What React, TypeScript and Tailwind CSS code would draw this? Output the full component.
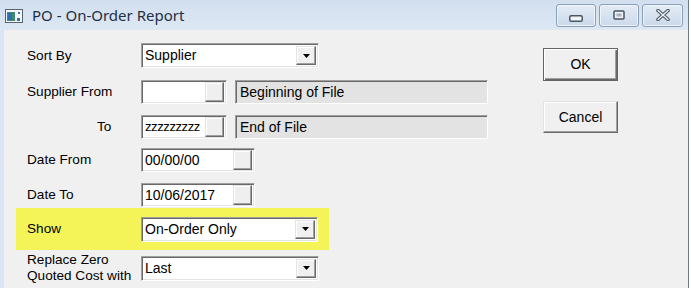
import React from 'react'

const sunken =
  'border border-t-[#a0a0a0] border-l-[#a0a0a0] border-b-white border-r-white shadow-[inset_1px_1px_0_#696969,inset_-1px_-1px_0_#e3e3e3]'
const raised =
  'border border-t-[#e3e3e3] border-l-[#e3e3e3] border-b-[#696969] border-r-[#696969] shadow-[inset_-1px_-1px_0_#a0a0a0,inset_1px_1px_0_#ffffff]'

function Arrow() {
  return (
    <svg width="7" height="4" viewBox="0 0 7 4">
      <path d="M0 0h7L3.5 4z" fill="#000" />
    </svg>
  )
}

function Combo({ value }: { value: string }) {
  return (
    <div className={`flex h-[25px] w-[178px] items-center bg-white pl-[3px] pr-[2px] ${sunken}`}>
      <span className="flex-1 truncate text-[14px] text-black">{value}</span>
      <div className={`flex h-[19px] w-[20px] items-center justify-center bg-[#f0f0f0] ${raised}`}>
        <Arrow />
      </div>
    </div>
  )
}

function Lookup({ value, width, textClass = 'text-[14px]' }: { value: string; width: string; textClass?: string }) {
  return (
    <div className={`flex h-[24px] items-center bg-white pl-[3px] pr-[2px] ${width} ${sunken}`}>
      <span className={`flex-1 whitespace-nowrap text-black ${textClass}`}>{value}</span>
      <div className={`h-[20px] w-[19px] shrink-0 bg-[#efefef] ${raised}`} />
    </div>
  )
}

function Desc({ text }: { text: string }) {
  return (
    <div className={`flex h-[24px] w-[253px] items-center bg-[#e3e3e3] pl-[4px] text-[14px] text-black ${sunken}`}>
      {text}
    </div>
  )
}

function Row({ label, children, className = '' }: { label: React.ReactNode; children: React.ReactNode; className?: string }) {
  return (
    <div className={`flex items-center px-[11px] ${className}`}>
      <div className="w-[114px] shrink-0 text-[13.6px] leading-[16px] text-black">{label}</div>
      {children}
    </div>
  )
}

function TitleButton({ children, wide = 'w-[40px]' }: { children: React.ReactNode; wide?: string }) {
  return (
    <div className={`flex h-[23px] ${wide} items-center justify-center rounded-[3px] border border-[#8a9fb8] bg-gradient-to-b from-[#e3ecf6] to-[#cad9ea] shadow-[inset_0_0_0_1px_#eef4fa]`}>
      {children}
    </div>
  )
}

export default function App() {
  return (
    <div className="h-[288px] w-[691px] overflow-hidden bg-white font-['Liberation_Sans',Arial,sans-serif]">
      <div className="flex h-[288px] w-[689px] flex-col border-r border-[#6b7787] bg-[#d9e5f2]">
        {/* title bar */}
        <div className="flex h-[30px] shrink-0 items-center bg-gradient-to-b from-[#d2dfee] to-[#dde8f4] pl-[5px] pr-[4px]">
          <svg width="18" height="14" viewBox="0 0 18 14" className="mt-[1px]">
            <rect x="0.5" y="0.5" width="17" height="13" fill="#f4f6f8" stroke="#5a6470" />
            <rect x="2" y="3" width="8" height="9" fill="#3f8a6c" />
            <rect x="3" y="4" width="4" height="7" fill="#2f6fb0" />
            <rect x="12" y="9" width="3" height="3" fill="#2f6fb0" />
            <rect x="13" y="3" width="2" height="2" fill="#3a7bd0" />
          </svg>
          <span className="ml-[9px] font-['Noto_Sans',sans-serif] text-[15px] text-[#1f2f44]">PO - On-Order Report</span>
          <div className="ml-auto flex gap-[3px] pr-[1px]">
            <TitleButton>
              <svg width="14" height="7" viewBox="0 0 14 7" className="mt-[6px]">
                <rect x="0.75" y="0.75" width="12.5" height="5.5" rx="1.5" fill="#f3f6f9" stroke="#4a5563" strokeWidth="1.5" />
              </svg>
            </TitleButton>
            <TitleButton>
              <svg width="12" height="10" viewBox="0 0 12 10">
                <rect x="1" y="1" width="10" height="8" rx="1" fill="#eef2f6" stroke="#4a5563" strokeWidth="1.5" />
                <rect x="3.5" y="3.5" width="5" height="3" fill="#a9b4c0" />
              </svg>
            </TitleButton>
            <TitleButton wide="w-[41px]">
              <svg width="14" height="12" viewBox="0 0 14 12">
                <path d="M2 1.5l10 9M12 1.5l-10 9" stroke="#4a5563" strokeWidth="3.6" strokeLinecap="round" />
                <path d="M2 1.5l10 9M12 1.5l-10 9" stroke="#eef2f6" strokeWidth="1.4" strokeLinecap="round" />
              </svg>
            </TitleButton>
          </div>
        </div>

        {/* body */}
        <div className="ml-[4px] flex flex-1 bg-[#f0f0f0]">
          <div className="ml-[12px] flex w-[508px] flex-col">
            <Row label="Sort By" className="mt-[13px]">
              <Combo value="Supplier" />
            </Row>
            <Row label="Supplier From" className="mt-[12px]">
              <Lookup value="" width="w-[86px]" />
              <div className="ml-[8px]">
                <Desc text="Beginning of File" />
              </div>
            </Row>
            <Row label={<span className="pl-[70px]">To</span>} className="mt-[11px]">
              <Lookup value="zzzzzzzzz" width="w-[86px]" textClass="text-[13px] tracking-[-0.4px]" />
              <div className="ml-[8px]">
                <Desc text="End of File" />
              </div>
            </Row>
            <Row label="Date From" className="mt-[9px]">
              <Lookup value="00/00/00" width="w-[114px]" />
            </Row>
            <Row label="Date To" className="mt-[11px]">
              <Lookup value="10/06/2017" width="w-[114px]" />
            </Row>
            <Row label="Show" className="mt-[1px] h-[42px] w-[313px] bg-[#f4f459]">
              <Combo value="On-Order Only" />
            </Row>
            <Row
              label={
                <>
                  Replace Zero
                  <br />
                  Quoted Cost with
                </>
              }
              className="mt-[2px]"
            >
              <Combo value="Last" />
            </Row>
          </div>

          <div className="ml-[19px] flex flex-col pt-[18px] text-[14px] text-black">
            <div className="flex h-[33px] w-[75px] items-center justify-center border border-[#646464] bg-[#f0f0f0] shadow-[inset_1px_1px_0_#ffffff,inset_-1px_-1px_0_#696969,inset_-2px_-2px_0_#a0a0a0]">
              OK
            </div>
            <div className={`mt-[20px] flex h-[32px] w-[75px] items-center justify-center bg-[#f0f0f0] ${raised}`}>
              Cancel
            </div>
          </div>
        </div>
      </div>
    </div>
  )
}
